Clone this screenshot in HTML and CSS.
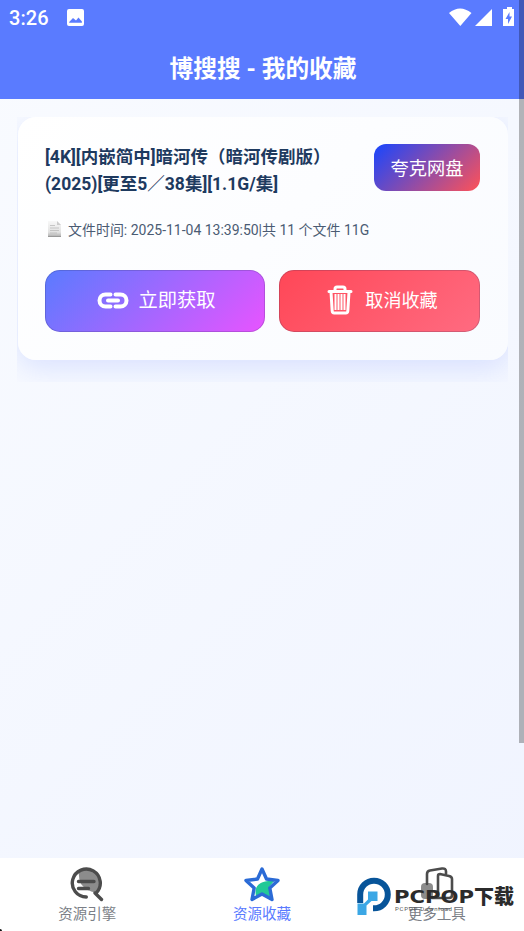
FILE: index.html
```
<!DOCTYPE html>
<html lang="zh-CN">
<head>
<meta charset="utf-8">
<title>博搜搜 - 我的收藏</title>
<link rel="stylesheet" href="styles.css">
</head>
<body>
<div class="app">
  <header class="header">
    <div class="status">
      <span class="clock">3:26</span>
      <svg class="picture" viewBox="0 0 17 17"><path fill="#fff" fill-rule="evenodd" d="M2 0h13a2 2 0 0 1 2 2v13a2 2 0 0 1-2 2H2a2 2 0 0 1-2-2V2a2 2 0 0 1 2-2zM2.2 13.7h12.7v-1.200L11.500 8.500 9 11.500 6 9 2.200 13z"/></svg>
      <svg class="signals" viewBox="0 0 68 20">
        <path fill="#fff" d="M0 6Q11-3 22.500 6L11.300 19zM43 2v17H26zM56 2h2V0h5v2h2v17H54V2z"/>
        <path fill="#5a7bff" d="M60.500 5 56.500 12h2.500v5l4-7.500h-2.500z"/>
      </svg>
    </div>
    <h1 class="title">博搜搜 - 我的收藏</h1>
  </header>
  <main class="main">
    <div class="card-wrap">
      <article class="card">
        <div class="card-head">
          <h2 class="name">[4K][内嵌简中]暗河传（暗河传剧版）<br>(2025)[更至5／38集][1.1G/集]</h2>
          <span class="badge">夸克网盘</span>
        </div>
        <div class="meta">
          <svg class="doc" viewBox="0 0 13 16"><defs><linearGradient id="paper" x2="0" y2="1"><stop stop-color="#f8f8f8"/><stop offset=".7" stop-color="#e2e2e2"/><stop offset="1" stop-color="#aaa"/></linearGradient></defs><path fill="url(#paper)" d="M0 0h9l4 4v12H0z"/><path d="M9 0v4h4" fill="#ccc"/><path d="M2 4.500h5M2 7h9M2 9.500h9M2 12h7" stroke="#bbb" stroke-width=".8"/><path d="M0 15.500h13" stroke="#999"/></svg>
          <span>文件时间: 2025-11-04 13:39:50|共 11 个文件 11G</span>
        </div>
        <div class="actions">
          <button class="btn get">
            <svg class="link" viewBox="0 0 32 17"><path d="M13.500 2.500H8.500a6 6 0 0 0 0 12H13.500M18.500 2.500h5a6 6 0 0 1 0 12H18.500M11 8.500h10" fill="none" stroke="#fff" stroke-width="4" stroke-linecap="round"/></svg>
            <span>立即获取</span>
          </button>
          <button class="btn remove">
            <svg class="trash" viewBox="0 0 26 30"><path d="M2 6.500h22M8 6V4q0-2 2-2h6q2 0 2 2v2M4 7l1.200 19q.1 2 2 2h11.600q1.900 0 2-2L22 7" fill="none" stroke="#fff" stroke-width="3" stroke-linecap="round"/><path d="M8.500 9v16M11.500 9v16M14.500 9v16M17.500 9v16" stroke="#fff" stroke-width="2"/></svg>
            <span>取消收藏</span>
          </button>
        </div>
      </article>
    </div>
  </main>
  <nav class="tabs">
    <a class="tab">
      <svg viewBox="0 0 36 36"><path d="M10 5A14 14 0 0 1 27.500 26.500Q18 26 12 18 9 11 10 5z" fill="#8c8c8c"/><path d="M17.300 31A14 14 0 1 1 27.200 26.900M26 27L32.500 33.500M9.500 15.500h15.500M9.500 22.500h10" fill="none" stroke="#4c4c4c" stroke-width="3.400" stroke-linecap="round"/></svg>
      <span>资源引擎</span>
    </a>
    <a class="tab active">
      <svg viewBox="0 0 36 36"><path d="M12 30Q9 17 24 15L31 14 25 21 27 32 18 28z" fill="#22c997"/><path d="M18 3 22.500 13 34 14.500 25.800 22 28 33.500 18 28 8 33.500 10.200 22 2 14.500 13.500 13z" fill="none" stroke="#2b6bd6" stroke-width="3.400" stroke-linejoin="round"/></svg>
      <span>资源收藏</span>
    </a>
    <a class="tab">
      <svg viewBox="0 0 36 36"><rect x="2" y="17" width="12" height="16" rx="4" fill="#8c8c8c"/><path d="M8 18V8q0-3 3-3.500L23 2.500q4-.5 4 3v3M19 32V10q0-2 2-2l9 2q3 .7 3 3v16q0 3-3 3H13" fill="none" stroke="#4c4c4c" stroke-width="2.600" stroke-linecap="round"/></svg>
      <span>更多工具</span>
    </a>
  </nav>
  <div class="scrollbar"></div>
  <svg class="watermark" viewBox="0 0 167 46">
    <path d="M3.200 27V18.500A13.800 13.800 0 1 1 17 32.300H16" fill="none" stroke="#075499" stroke-width="6"/>
    <path fill="#3ba7e5" d="M11 15.500h9.500v9.500h-6l-5 4.500V39H.500V27.500H7l4-4z"/>
    <g class="wordmark"><text class="latin" x="37" y="27" font-size="17.500" textLength="80" lengthAdjust="spacingAndGlyphs">PCPOP</text><text x="117" y="27.500" font-size="20" textLength="40" lengthAdjust="spacingAndGlyphs">下载</text></g>
    <text class="wordmark-sub" x="38" y="35" textLength="57">PCPOP Download</text>
  </svg>
  <div class="corner"></div>
</div>
</body>
</html>
```
FILE: styles.css
```
* { box-sizing: border-box; }
body { margin: 0; font-family: Roboto, "Noto Sans CJK SC", sans-serif; }
.app { position: relative; display: flex; flex-direction: column; width: 524px; height: 931px; overflow: hidden; background: linear-gradient(135deg, #f9fbff, #f0f4ff); }
.header { height: 99px; flex: none; background: #5a7bff; color: #fff; }
.status { display: flex; align-items: center; height: 36px; padding: 0 7px 0 9px; }
.clock { font-size: 20px; font-weight: 500; letter-spacing: .1px; width: 58px; }
.picture { width: 17px; height: 17px; margin-top: -1px; }
.signals { width: 68px; height: 20px; margin: -2px 0 0 auto; }
.title { margin: 15px 0 0; padding-left: 2px; text-align: center; font-size: 23.700px; line-height: 36px; font-weight: 700; }
.main { flex: 1; padding: 18px 16px 0 17px; }
.card-wrap { height: 265px; overflow: hidden; padding-left: 1px; }
.card { width: 490px; height: 243px; padding: 27px 28px 0 27px; border-radius: 18px; background: linear-gradient(135deg, #fff, #f9fbff); box-shadow: 0 8px 28px rgba(90, 123, 255, .18); }
.card-head { display: flex; justify-content: space-between; align-items: flex-start; height: 47px; }
.name { margin: 0; color: #1e3a5f; font-size: 17.500px; line-height: 26.500px; font-weight: 700; white-space: nowrap; }
.badge { width: 106px; height: 47px; border-radius: 12px; color: #fff; font-size: 18.200px; line-height: 50px; text-align: center; background: linear-gradient(135deg, #1746ff, #ff5257); }
.meta { display: flex; align-items: center; height: 20px; margin-top: 28px; gap: 7px; padding-left: 3px; color: #4a5b73; font-size: 13.980px; white-space: nowrap; }
.doc { width: 13px; height: 16px; }
.actions { display: flex; gap: 14px; margin-top: 31px; }
.btn { display: flex; align-items: center; justify-content: center; height: 62px; padding: 0 0 2px; border: 1px solid rgba(40, 40, 80, .2); border-radius: 15px; color: #fff; font-family: inherit; background-origin: border-box; }
.btn span { margin-top: -2px; }
.get { width: 220px; gap: 9px; padding-left: 3px; font-size: 19.300px; background-image: linear-gradient(135deg, #5a7bff, #e854ff); }
.remove { width: 201px; gap: 12px; padding-left: 6px; font-size: 18.100px; background-image: linear-gradient(135deg, #ff4757, #ff6b81); }
.link { width: 32px; height: 17px; }
.trash { width: 26px; height: 30px; }
.tabs { display: flex; height: 73px; flex: none; background: #fff; }
.tab { flex: 1; display: flex; flex-direction: column; align-items: center; padding-top: 8px; color: #7b7f87; font-size: 14.500px; line-height: 22px; }
.tab svg { width: 36px; height: 36px; margin-bottom: 2px; }
.active { color: #5a7bff; }
.scrollbar { position: absolute; top: 0; right: 0; width: 5px; height: 743px; background: rgba(0, 0, 0, .28); }
.watermark { position: absolute; left: 357px; top: 876px; width: 167px; height: 46px; }
.wordmark { fill: #2b2b2b; font-family: "Noto Sans CJK SC", sans-serif; font-weight: 900; }
.latin { font-family: "DejaVu Sans", sans-serif; font-weight: 700; }
.wordmark-sub { fill: #555; font-size: 6px; }
.corner { position: absolute; left: 0; bottom: 0; width: 2px; height: 2px; background: #111; border-top-right-radius: 2px; }
```
